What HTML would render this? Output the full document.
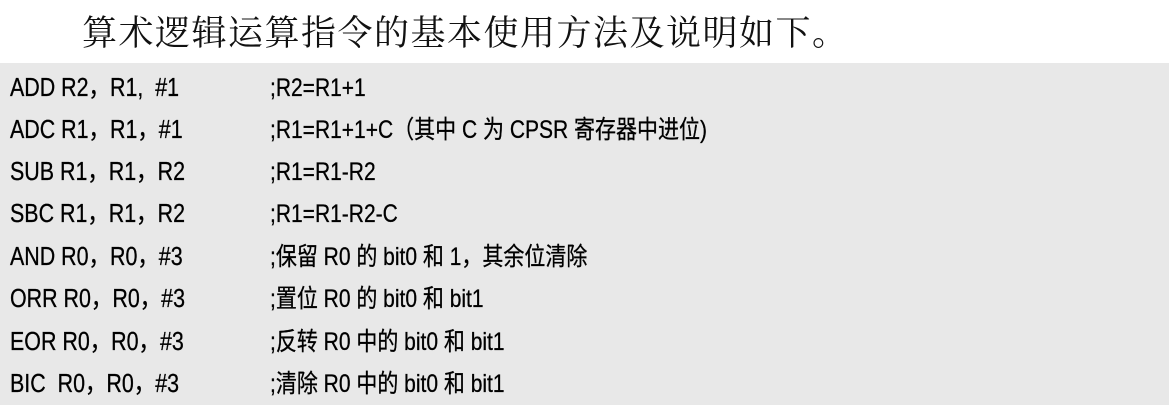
<!DOCTYPE html>
<html><head><meta charset="utf-8"><style>
body{margin:0;width:1173px;height:412px;background:#fff;position:relative;overflow:hidden}
.t{position:absolute;left:82px;top:6px;font:35px "Noto Serif CJK SC","Liberation Serif",serif;color:#111;letter-spacing:1.5px;white-space:nowrap}
.box{position:absolute;left:0;top:63px;width:1169px;height:342px;background:#e8e8e8}
.l{position:absolute;font:25px "Liberation Sans","Noto Sans CJK SC",sans-serif;color:#000;white-space:nowrap;transform:scaleX(0.84);transform-origin:0 0;line-height:30px;-webkit-text-stroke:0.3px #000}
.c{font-size:25.5px}
</style></head><body>
<div class="t">算术逻辑运算指令的基本使用方法及说明如下。</div>
<div class="box"></div>
<div class="l c" style="left:10px;top:73px">ADD R2，R1, &nbsp;#1</div><div class="l" style="left:270px;top:73px">;R2=R1+1</div>
<div class="l c" style="left:10px;top:115px">ADC R1，R1，#1</div><div class="l" style="left:270px;top:115px">;R1=R1+1+C（其中 C 为 CPSR 寄存器中进位)</div>
<div class="l c" style="left:10px;top:157px">SUB R1，R1，R2</div><div class="l" style="left:270px;top:157px">;R1=R1-R2</div>
<div class="l c" style="left:10px;top:199px">SBC R1，R1，R2</div><div class="l" style="left:270px;top:199px">;R1=R1-R2-C</div>
<div class="l c" style="left:10px;top:242px">AND R0，R0，#3</div><div class="l" style="left:270px;top:242px">;保留 R0 的 bit0 和 1，其余位清除</div>
<div class="l c" style="left:10px;top:284px">ORR R0，R0，#3</div><div class="l" style="left:270px;top:284px">;置位 R0 的 bit0 和 bit1</div>
<div class="l c" style="left:10px;top:327px">EOR R0，R0，#3</div><div class="l" style="left:270px;top:327px">;反转 R0 中的 bit0 和 bit1</div>
<div class="l c" style="left:10px;top:369px">BIC&nbsp; R0，R0，#3</div><div class="l" style="left:270px;top:369px">;清除 R0 中的 bit0 和 bit1</div>
</body></html>
